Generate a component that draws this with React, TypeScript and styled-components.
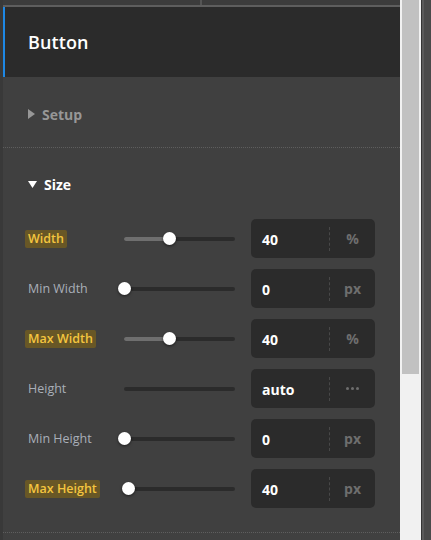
import React from "react";
import styled, { createGlobalStyle } from "styled-components";

const Global = createGlobalStyle`
  html, body { margin: 0; padding: 0; background: #404040; }
  body { font-family: "Open Sans", "Noto Sans", sans-serif; -webkit-font-smoothing: antialiased; }
  #root { width: 431px; height: 540px; overflow: hidden; }
`;

const Frame = styled.div`
  display: flex;
  width: 431px;
  height: 540px;
`;

const Panel = styled.div`
  width: 397px;
  flex: none;
  display: flex;
  flex-direction: column;
  background: #404040;
  border-left: 3px solid #393939;
`;

const TopStrip = styled.div`
  height: 5px;
  background: #3c3c3c;
  border-bottom: 2px solid #5e5e5e;
  display: grid;
  grid-template-columns: 197px 2px 1fr;
`;

const StripDivider = styled.div`
  grid-column: 2;
  background: #555;
`;

const Header = styled.div`
  height: 70px;
  background: #2b2b2b;
  border-left: 2px solid #1e88e5;
  display: flex;
  align-items: center;
  padding-left: 23px;
  color: #fff;
  font-size: 18px;
  font-weight: 600;
  letter-spacing: 0.1px;
`;

const Section = styled.div<{ $pt: number; $pb: number }>`
  padding: ${(p) => p.$pt}px 0 ${(p) => p.$pb}px 0;
  border-bottom: 1px dotted #5e5e5e;
  display: flex;
  flex-direction: column;
`;

const SectionTitle = styled.div<{ $open?: boolean }>`
  display: flex;
  align-items: center;
  height: 20px;
  padding-left: 25px;
  gap: 7px;
  font-size: 14px;
  font-weight: 700;
  color: ${(p) => (p.$open ? "#ffffff" : "#979797")};
`;

const Caret = styled.svg`
  flex: none;
  display: block;
`;

const Rows = styled.div`
  display: flex;
  flex-direction: column;
  gap: 11px;
  margin-top: 25px;
`;

const Row = styled.div`
  display: flex;
  align-items: center;
  height: 39px;
  padding-left: 22px;
`;

const LabelCell = styled.div`
  width: 99px;
  flex: none;
  display: flex;
`;

const Label = styled.span<{ $hl?: boolean }>`
  font-size: 12.5px;
  line-height: 18px;
  padding: 0 3px;
  border-radius: 2px;
  white-space: nowrap;
  color: ${(p) => (p.$hl ? "#f4c53f" : "#a9afb8")};
  background: ${(p) => (p.$hl ? "#685726" : "transparent")};
  font-weight: ${(p) => (p.$hl ? 600 : 400)};
`;

const Track = styled.div`
  position: relative;
  width: 111px;
  height: 4px;
  flex: none;
  border-radius: 2px;
  background: #2b2b2b;
`;

const Fill = styled.div`
  position: absolute;
  left: 0;
  top: 0;
  bottom: 0;
  background: #6f6f6f;
  border-radius: 2px 0 0 2px;
`;

const Thumb = styled.div`
  position: absolute;
  top: 50%;
  width: 13px;
  height: 13px;
  margin: -6.5px 0 0 -6.5px;
  border-radius: 50%;
  background: #ffffff;
  box-shadow: 0 1px 3px rgba(0, 0, 0, 0.55);
`;

const InputBox = styled.div`
  margin-left: 16px;
  width: 124px;
  height: 39px;
  flex: none;
  display: flex;
  border-radius: 5px;
  background: #2b2b2b;
`;

const Value = styled.div`
  width: 67px;
  padding-left: 11px;
  display: flex;
  align-items: center;
  color: #fff;
  font-size: 14px;
  font-weight: 700;
  border-right: 1px dashed #484848;
  margin: 8px 0 7px 0;
`;

const Unit = styled.div`
  flex: 1;
  display: flex;
  align-items: center;
  justify-content: center;
  color: #6e6e6e;
  font-size: 14px;
  font-weight: 700;
`;

const Dots = styled.div`
  display: flex;
  gap: 2px;
`;

const Dot = styled.span`
  width: 3px;
  height: 3px;
  border-radius: 50%;
  background: #6e6e6e;
`;

const ScrollTrack = styled.div`
  width: 21px;
  flex: none;
  background: #f1f1f1;
  display: flex;
  justify-content: center;
`;

const ScrollThumb = styled.div`
  width: 17px;
  height: 374px;
  background: #c1c1c1;
`;

const RightEdge = styled.div`
  flex: 1;
  background: #4a4a4a;
  border-left: 1px solid #353535;
  box-shadow: inset 2px 0 0 #5a5a5a;
`;

type RowData = { label: string; hl?: boolean; value: string; unit: string; pos: number | null };

const rows: RowData[] = [
  { label: "Width", hl: true, value: "40", unit: "%", pos: 45 },
  { label: "Min Width", value: "0", unit: "px", pos: 0 },
  { label: "Max Width", hl: true, value: "40", unit: "%", pos: 45 },
  { label: "Height", value: "auto", unit: "dots", pos: null },
  { label: "Min Height", value: "0", unit: "px", pos: 0 },
  { label: "Max Height", hl: true, value: "40", unit: "px", pos: 4 },
];

export default function App() {
  return (
    <Frame>
      <Global />
      <Panel>
        <TopStrip>
          <StripDivider />
        </TopStrip>
        <Header>Button</Header>
        <Section $pt={27} $pb={23}>
          <SectionTitle>
            <Caret width="7" height="10" viewBox="0 0 7 10">
              <path d="M0 0 L7 5 L0 10 Z" fill="#979797" />
            </Caret>
            Setup
          </SectionTitle>
        </Section>
        <Section $pt={26} $pb={24}>
          <SectionTitle $open>
            <Caret width="9" height="7" viewBox="0 0 9 7">
              <path d="M0 0 L9 0 L4.5 7 Z" fill="#ffffff" />
            </Caret>
            Size
          </SectionTitle>
          <Rows>
            {rows.map((r) => (
              <Row key={r.label}>
                <LabelCell>
                  <Label $hl={r.hl}>{r.label}</Label>
                </LabelCell>
                <Track>
                  {r.pos !== null && (
                    <>
                      <Fill style={{ width: r.pos }} />
                      <Thumb style={{ left: r.pos }} />
                    </>
                  )}
                </Track>
                <InputBox>
                  <Value>{r.value}</Value>
                  <Unit>
                    {r.unit === "dots" ? (
                      <Dots>
                        <Dot />
                        <Dot />
                        <Dot />
                      </Dots>
                    ) : (
                      r.unit
                    )}
                  </Unit>
                </InputBox>
              </Row>
            ))}
          </Rows>
        </Section>
      </Panel>
      <ScrollTrack>
        <ScrollThumb />
      </ScrollTrack>
      <RightEdge />
    </Frame>
  );
}
